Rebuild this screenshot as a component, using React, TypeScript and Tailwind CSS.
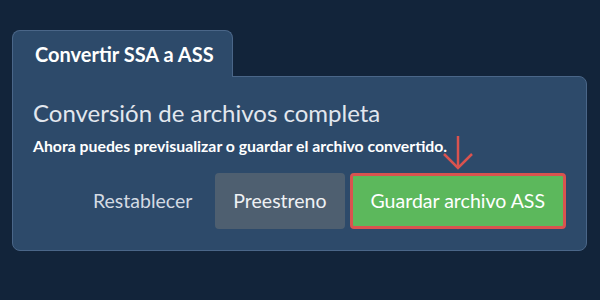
import React from 'react';

const App: React.FC = () => {
  return (
    <div
      className="w-[600px] h-[300px] bg-[#12243a] pt-[30px] px-[12px]"
      style={{ fontFamily: 'Lato, "Noto Sans", sans-serif' }}
    >
      {/* Tab */}
      <div className="relative z-10 -mb-px flex h-[47px] w-[221px] items-center rounded-t-lg border-x border-t border-[#4a6688] bg-[#2d4a6a] pl-[22px]">
        <span className="text-[20px] font-bold text-white">Convertir SSA a ASS</span>
      </div>

      {/* Card */}
      <div className="h-[175px] w-[575px] rounded-b-lg rounded-tr-lg border border-[#4a6688] bg-[#2d4a6a] px-[20px] pt-[21px]">
        <h2 className="text-[24px] leading-[30px] text-[#e2e7ee]">Conversión de archivos completa</h2>
        <p className="mt-[8px] text-[15.8px] font-bold leading-[20px] text-white">
          Ahora puedes previsualizar o guardar el archivo convertido.
        </p>

        <div className="mt-[17px] flex justify-end gap-[5px]">
          <button className="h-[56px] rounded px-[18px] text-[19.5px] text-[#d3dae3]">Restablecer</button>
          <button className="h-[56px] rounded bg-[#4e5f70] px-[18px] text-[19.5px] text-[#eef1f4]">Preestreno</button>
          <div className="relative">
            <svg
              className="absolute bottom-[calc(100%+3px)] left-1/2 -translate-x-1/2"
              width="32"
              height="36"
              viewBox="0 0 32 36"
              fill="none"
              stroke="#d9534f"
              strokeWidth="2.5"
            >
              <path d="M16 2 V34" />
              <path d="M2 20 L16 34 L30 20" />
            </svg>
            <button className="h-[56px] rounded border-[3px] border-[#d9534f] bg-[#5cb85c] px-[18px] text-[19.5px] text-white">
              Guardar archivo ASS
            </button>
          </div>
        </div>
      </div>
    </div>
  );
};

export default App;
